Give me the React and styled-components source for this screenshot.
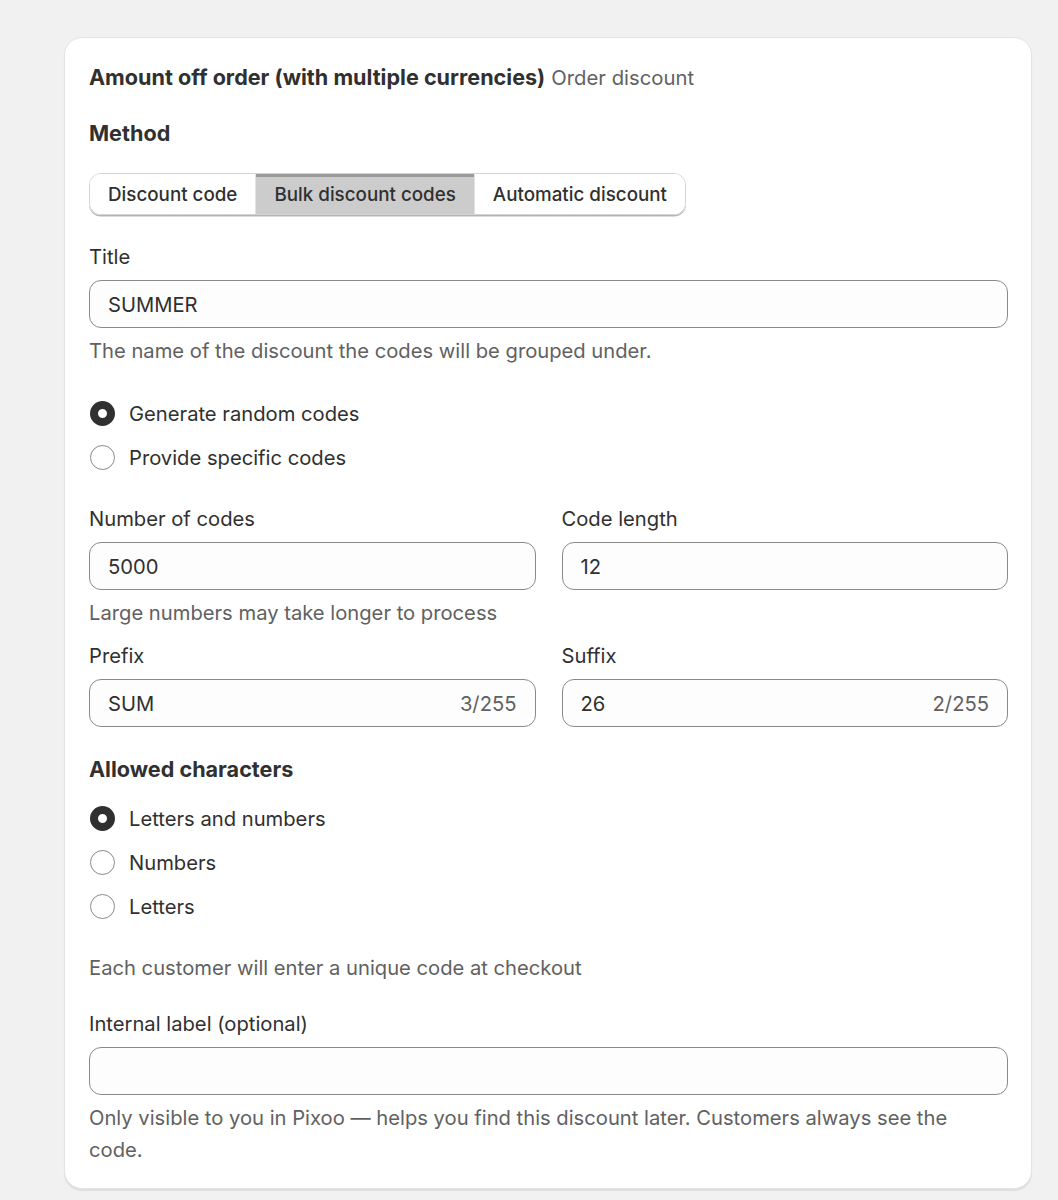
import styled, { createGlobalStyle } from "styled-components";

const GlobalStyle = createGlobalStyle`
  body {
    margin: 0;
    background: #f1f1f1;
    font-family: Inter, "Noto Sans", sans-serif;
    color: #303030;
  }
`;

const Page = styled.div`
  padding: 37px 26px 12px 64px;
`;

const Card = styled.div`
  background: #fff;
  border-radius: 18px;
  border: 1px solid #e3e3e3;
  box-shadow: 0 2px 1px rgba(0, 0, 0, 0.08);
  padding: 24px 23px 22px 24px;
  display: flex;
  flex-direction: column;
`;

const Header = styled.div`
  font-size: 21.6px;
  line-height: 30px;
  margin-bottom: 25px;
`;

const Strong = styled.span`
  font-weight: 650;
`;

const Muted = styled.span`
  color: #616161;
  font-size: 20.3px;
`;

const SectionTitle = styled.div`
  font-size: 21.6px;
  font-weight: 650;
  line-height: 30px;
  margin-top: ${p => p.$top ?? 0}px;
  margin-bottom: ${p => p.$gap ?? 12}px;
`;

const Segmented = styled.div`
  display: inline-flex;
  align-self: flex-start;
  border: 1px solid #d4d4d4;
  border-radius: 12px;
  box-shadow: 0 1.5px 0 #b5b5b5;
  overflow: hidden;
  margin-bottom: 30px;
`;

const Segment = styled.button`
  font-family: inherit;
  font-size: 18.8px;
  font-weight: 550;
  color: #303030;
  height: 40px;
  padding: 0 18px;
  border: none;
  border-left: ${p => (p.$first ? "none" : "1px solid #e3e3e3")};
  background: ${p => (p.$active ? "#cccccc" : "#fff")};
  box-shadow: ${p => (p.$active ? "inset 0 3px 0 #9a9a9a" : "none")};
`;

const Field = styled.div`
  display: flex;
  flex-direction: column;
  min-width: 0;
`;

const Label = styled.label`
  font-size: 20.2px;
  line-height: 24px;
  margin-bottom: 11px;
`;

const InputBox = styled.div`
  height: 48px;
  box-sizing: border-box;
  border: 1.5px solid #8a8a8a;
  border-radius: 12px;
  background: #fdfdfd;
  display: flex;
  align-items: center;
  justify-content: space-between;
  padding: 0 18px;
  font-size: 20.2px;
`;

const Counter = styled.span`
  color: #616161;
`;

const Help = styled.div`
  font-size: 20.2px;
  line-height: 32px;
  color: #616161;
  max-width: ${p => p.$max || "none"};
  margin-top: ${p => p.$top ?? 7}px;
  margin-bottom: ${p => p.$bottom ?? 0}px;
`;

const RadioList = styled.div`
  display: flex;
  flex-direction: column;
  gap: 19px;
  margin-top: ${p => p.$top ?? 0}px;
  margin-bottom: ${p => p.$bottom ?? 0}px;
`;

const RadioRow = styled.div`
  display: flex;
  align-items: center;
  gap: 14px;
  font-size: 20.2px;
  line-height: 24px;
`;

const RadioDot = styled.span`
  width: 25px;
  height: 25px;
  box-sizing: border-box;
  border-radius: 50%;
  margin-left: 1px;
  border: ${p => (p.$checked ? "8px solid #303030" : "1.5px solid #8a8a8a")};
  background: #fff;
  flex: none;
`;

const Grid = styled.div`
  display: grid;
  grid-template-columns: 1fr 1fr;
  column-gap: 26px;
`;

function Radio({ checked, children }) {
  return (
    <RadioRow>
      <RadioDot $checked={checked} />
      <span>{children}</span>
    </RadioRow>
  );
}

function TextField({ label, value, count }) {
  return (
    <Field>
      <Label>{label}</Label>
      <InputBox>
        <span>{value}</span>
        {count && <Counter>{count}</Counter>}
      </InputBox>
    </Field>
  );
}

export default function App() {
  return (
    <>
      <GlobalStyle />
      <Page>
        <Card>
          <Header>
            <Strong>Amount off order (with multiple currencies)</Strong>{" "}
            <Muted>Order discount</Muted>
          </Header>

          <SectionTitle $gap={25}>Method</SectionTitle>
          <Segmented>
            <Segment $first>Discount code</Segment>
            <Segment $active>Bulk discount codes</Segment>
            <Segment>Automatic discount</Segment>
          </Segmented>

          <TextField label="Title" value="SUMMER" />
          <Help>The name of the discount the codes will be grouped under.</Help>

          <RadioList $top={34} $bottom={37}>
            <Radio checked>Generate random codes</Radio>
            <Radio>Provide specific codes</Radio>
          </RadioList>

          <Grid>
            <TextField label="Number of codes" value="5000" />
            <TextField label="Code length" value="12" />
          </Grid>
          <Help $bottom={15}>Large numbers may take longer to process</Help>
          <Grid>
            <TextField label="Prefix" value="SUM" count="3/255" />
            <TextField label="Suffix" value="26" count="2/255" />
          </Grid>

          <SectionTitle $top={27} $gap={22}>Allowed characters</SectionTitle>
          <RadioList $bottom={33}>
            <Radio checked>Letters and numbers</Radio>
            <Radio>Numbers</Radio>
            <Radio>Letters</Radio>
          </RadioList>

          <Help $top={0} $bottom={28}>Each customer will enter a unique code at checkout</Help>

          <TextField label="Internal label (optional)" value="" />
          <Help $max="900px">
            Only visible to you in Pixoo — helps you find this discount later. Customers always see the code.
          </Help>
        </Card>
      </Page>
    </>
  );
}
